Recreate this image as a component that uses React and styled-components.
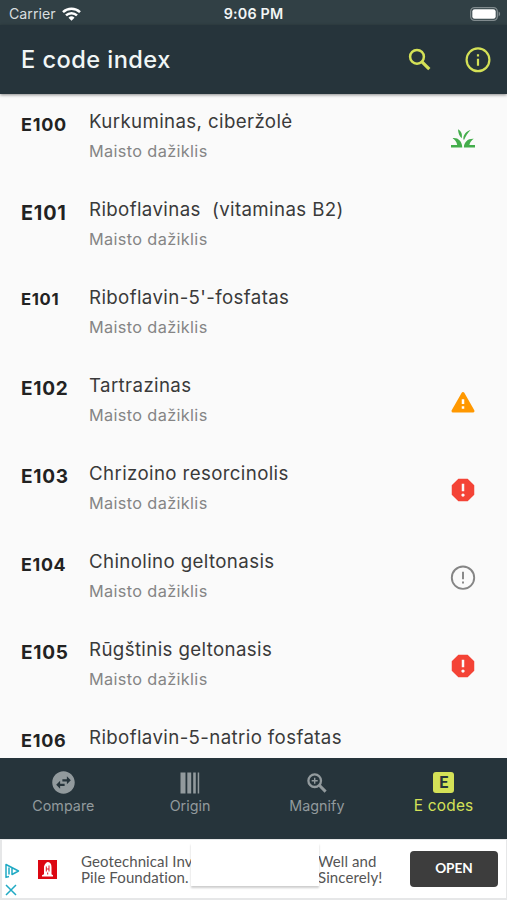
import { createGlobalStyle, styled } from "styled-components";
import { MdReport, MdSwapHorizontalCircle } from "react-icons/md";

const codes = [
  { code: "E100", size: 18, name: "Kurkuminas, ciberžolė", status: "plant" },
  { code: "E101", size: 19.8, name: "Riboflavinas  (vitaminas B2)" },
  { code: "E101", size: 16.6, name: "Riboflavin-5'-fosfatas" },
  { code: "E102", size: 19, name: "Tartrazinas", status: "warning" },
  { code: "E103", size: 19, name: "Chrizoino resorcinolis", status: "danger" },
  { code: "E104", size: 17.8, name: "Chinolino geltonasis", status: "unknown" },
  { code: "E105", size: 19, name: "Rūgštinis geltonasis", status: "danger" },
  { code: "E106", size: 18, name: "Riboflavin-5-natrio fosfatas" },
];

const PlantIcon = () => (
  <svg width="26" height="26" viewBox="0 0 26 26" fill="#43ad4b">
    <path d="M1 22.500v-2.400h6.200c-.6-3.400-2.200-5.600-4.600-6.900 5.300-.7 9.400 2.700 9.700 9.300z" />
    <path d="M25 22.500v-2.400h-5.600c.6-2.800 2-4.800 4.300-6.300-5.800-.3-9.800 3.200-9.800 8.700z" />
    <path d="M8 4.300c3.100 1.700 4.500 4.500 3.700 9-2.300-2.100-3.500-5-3.700-9z" />
    <path d="M20.600 5.100c-4.100 1.200-6.900 4-7.300 8.400l.6 1.700c2.100-4.300 3.700-7 6.700-10.100z" />
  </svg>
);

const WarningIcon = () => (
  <svg width="26" height="26" viewBox="0 0 26 26" fill="none">
    <path d="M13 4.500 23 22H3z" fill="#ff9800" stroke="#ff9800" strokeWidth="3" strokeLinejoin="round" />
    <path d="M13 10.300v4.600M13 17.300v2.500" stroke="#fff" strokeWidth="2.500" />
  </svg>
);

const UnknownIcon = () => (
  <svg width="26" height="27" viewBox="0 0 26 27" fill="none" stroke="#858585" strokeWidth="1.900">
    <circle cx="13" cy="12.700" r="11.200" />
    <path d="M13 6.800v7.400M13 16.600v2" />
  </svg>
);

const InfoIcon = () => (
  <svg width="26" height="26" viewBox="0 0 26 26" fill="none" stroke="currentColor" strokeWidth="2.200">
    <circle cx="13" cy="12.800" r="11.400" />
    <path d="M13 11.800v6.900M13 7.300v2.300" />
  </svg>
);

const SearchIcon = () => (
  <svg width="23" height="23" viewBox="0 0 23 23" fill="none" stroke="currentColor">
    <circle cx="9" cy="8.800" r="6.900" strokeWidth="2.500" />
    <path d="m14 13.800 7.300 7.300" strokeWidth="3.200" />
  </svg>
);

const ZoomIcon = () => (
  <svg width="20" height="20" viewBox="0 0 20 20" fill="none" stroke="currentColor">
    <circle cx="7.700" cy="7.700" r="6.300" strokeWidth="2.300" />
    <path d="m12.300 12.300 6.300 6.300" strokeWidth="3" />
    <path d="M7.700 4.700v6M4.700 7.700h6" strokeWidth="1.400" />
  </svg>
);

const statusIcons = {
  plant: <PlantIcon />,
  warning: <WarningIcon />,
  danger: <MdReport size={30} color="#f44336" />,
  unknown: <UnknownIcon />,
};

const WifiIcon = () => (
  <svg width="19" height="14" viewBox="0 0 19 14" fill="none" stroke="#fff" strokeWidth="2.500">
    <path d="M1 5.200a12.300 12.300 0 0 1 17 0" />
    <path d="M4 8.400a8 8 0 0 1 11 0" />
    <path d="M9.500 13.700 6.500 10.700a4.300 4.300 0 0 1 6 0z" fill="#fff" stroke="none" />
  </svg>
);

const BatteryIcon = () => (
  <svg width="31" height="14" viewBox="0 0 31 14">
    <rect x=".7" y=".7" width="26.600" height="12.600" rx="3.800" fill="none" stroke="#818b8e" strokeWidth="1.300" />
    <rect x="2.300" y="2.300" width="23.400" height="9.400" rx="2.300" fill="#fff" />
    <path d="M28.600 4.600c2 .8 2 4 0 4.800z" fill="#818b8e" />
  </svg>
);

const BarcodeIcon = () => (
  <svg width="20" height="22" viewBox="0 0 20 22" fill="currentColor">
    <path d="M.5.500h5v21h-5zM7.300.500h3.900v21H7.300zM13.200.500h2.600v21h-2.600zM17.700.500h1.500v21h-1.500z" />
  </svg>
);

const AdChoicesIcon = () => (
  <svg width="15" height="16" viewBox="0 0 15 16" fill="none" stroke="#20aac4" strokeWidth="1.500">
    <path d="M4 13.500 1 14.400V1.500L13.500 8 7 11.500V5.200" strokeLinejoin="round" />
    <path d="M4 4.500v7" />
  </svg>
);

const CloseIcon = () => (
  <svg width="12" height="12" viewBox="0 0 12 12" stroke="#20aac4" strokeWidth="1.500">
    <path d="m1 1 10 10M11 1 1 11" />
  </svg>
);

const AdvertiserLogo = () => (
  <svg width="19" height="19" viewBox="0 0 19 19">
    <path d="M0 0h19v19H0z" fill="#dc0712" />
    <path d="M4 16.500v-1.300l2-1V6.500C7 3.500 8.500 2 10 2c2.200 0 3.500 2.400 3.500 5v7.200l1.500 1v1.300z" fill="#fff" />
    <path d="M8.300 6.500v5M11 5.500v6M8.300 9H11M9.700 12.500v2" stroke="#dc0712" strokeWidth=".9" />
  </svg>
);

const CodeRow = ({ code, size, name, status }) => (
  <Row>
    <Code $size={size}>{code}</Code>
    <Info>
      <Name>{name}</Name>
      <Category>Maisto dažiklis</Category>
    </Info>
    <Status>{statusIcons[status]}</Status>
  </Row>
);

const App = () => (
  <Screen>
    <GlobalStyle />
    <StatusBar>
      <Carrier>
        Carrier <WifiIcon />
      </Carrier>
      <Clock>9:06 PM</Clock>
      <Battery>
        <BatteryIcon />
      </Battery>
    </StatusBar>
    <AppBar>
      <Title>E code index</Title>
      <Actions>
        <IconButton aria-label="Search">
          <SearchIcon />
        </IconButton>
        <IconButton aria-label="Info">
          <InfoIcon />
        </IconButton>
      </Actions>
    </AppBar>
    <List>
      {codes.map((item, index) => (
        <CodeRow key={index} {...item} />
      ))}
    </List>
    <TabBar>
      <Tab>
        <TabIcon>
          <MdSwapHorizontalCircle size={27} />
        </TabIcon>
        <TabLabel>Compare</TabLabel>
      </Tab>
      <Tab>
        <TabIcon>
          <BarcodeIcon />
        </TabIcon>
        <TabLabel>Origin</TabLabel>
      </Tab>
      <Tab>
        <TabIcon>
          <ZoomIcon />
        </TabIcon>
        <TabLabel>Magnify</TabLabel>
      </Tab>
      <Tab $active>
        <TabIcon>
          <Badge>E</Badge>
        </TabIcon>
        <TabLabel $active>E codes</TabLabel>
      </Tab>
    </TabBar>
    <Ad>
      <AdControls>
        <AdChoicesIcon />
        <CloseIcon />
      </AdControls>
      <AdvertiserLogo />
      <AdText>
        <span>Geotechnical Inv</span>
        <span>Pile Foundation.</span>
      </AdText>
      <AdTextEnd>
        <span>Well and</span>
        <span>Sincerely!</span>
      </AdTextEnd>
      <OpenButton>OPEN</OpenButton>
      <AdCover />
    </Ad>
  </Screen>
);

export default App;

const GlobalStyle = createGlobalStyle`
  * {
    box-sizing: border-box;
  }
  body {
    margin: 0;
    font-family: Inter, "Liberation Sans", sans-serif;
  }
  svg {
    display: block;
    flex-shrink: 0;
  }
`;

const Screen = styled.div`
  display: flex;
  flex-direction: column;
  height: 900px;
  background: #fafafa;
  overflow: hidden;
`;

const StatusBar = styled.div`
  display: grid;
  grid-template-columns: 1fr auto 1fr;
  align-items: center;
  height: 25px;
  padding: 2px 6px 0 9px;
  background: #314045;
  color: #fff;
  flex-shrink: 0;
`;

const Carrier = styled.div`
  display: flex;
  align-items: center;
  gap: 6px;
  font-size: 14.2px;
  color: #d8dddf;
`;

const Clock = styled.div`
  margin-left: -3px;
  font-size: 14.3px;
  font-weight: 600;
  letter-spacing: 0.2px;
  color: #f2f5f5;
`;

const Battery = styled.div`
  display: flex;
  justify-content: flex-end;
`;

const AppBar = styled.header`
  display: flex;
  justify-content: space-between;
  align-items: center;
  height: 69px;
  padding: 0 16px 0 21px;
  background: #26343b;
  box-shadow: 0 1px 3px rgba(0, 0, 0, 0.45);
  flex-shrink: 0;
  z-index: 1;
`;

const Title = styled.h1`
  margin: 0;
  font-size: 23.6px;
  font-weight: 500;
  letter-spacing: 0.45px;
  color: #f1f6f6;
`;

const Actions = styled.div`
  display: flex;
  align-items: center;
  gap: 34px;
`;

const IconButton = styled.button`
  padding: 0;
  border: none;
  background: none;
  color: #d4e157;
`;

const List = styled.main`
  flex: 1;
  min-height: 0;
  overflow: hidden;
`;

const Row = styled.div`
  display: grid;
  grid-template-columns: 68px 1fr 30px;
  height: 88px;
  padding: 0 29px 0 21px;
`;

const Code = styled.div`
  padding-top: 19px;
  font-size: ${(props) => props.$size}px;
  font-weight: 700;
  line-height: 1.3;
  letter-spacing: 0.04em;
  color: #222;
`;

const Info = styled.div`
  display: flex;
  flex-direction: column;
  padding-top: 16px;
`;

const Name = styled.div`
  font-size: 18.7px;
  line-height: 24px;
  letter-spacing: 0.37px;
  white-space: pre;
  color: #3a3a3a;
`;

const Category = styled.div`
  margin-top: 7px;
  font-size: 16.3px;
  line-height: 20px;
  letter-spacing: 0.35px;
  color: #858585;
`;

const Status = styled.div`
  display: flex;
  align-items: center;
  justify-content: center;
`;

const TabBar = styled.nav`
  display: grid;
  grid-template-columns: repeat(4, 1fr);
  height: 81px;
  padding-top: 11px;
  background: #26343b;
  flex-shrink: 0;
`;

const Tab = styled.div`
  display: flex;
  flex-direction: column;
  align-items: center;
  color: ${(props) => (props.$active ? "#d4e157" : "#929a9d")};
`;

const TabIcon = styled.div`
  display: flex;
  align-items: center;
  height: 27px;
`;

const TabLabel = styled.div`
  font-size: ${(props) => (props.$active ? 15.4 : 14.3)}px;
  line-height: 19px;
  letter-spacing: ${(props) => (props.$active ? 0.2 : 0.05)}px;
`;

const Badge = styled.div`
  width: 21px;
  height: 21px;
  border-radius: 3px;
  background: #d4e157;
  color: #26343b;
  font-family: Roboto, sans-serif;
  font-size: 16px;
  font-weight: 700;
  line-height: 21px;
  text-align: center;
`;

const Ad = styled.aside`
  position: relative;
  display: flex;
  align-items: center;
  height: 61px;
  padding: 0 8px 0 3px;
  border: solid #e6e7e8;
  border-width: 1px 1px 2px 2px;
  background: #fff;
  flex-shrink: 0;
`;

const AdControls = styled.div`
  display: flex;
  flex-direction: column;
  gap: 5px;
  width: 33px;
  padding-top: 20px;
`;

const AdText = styled.div`
  display: flex;
  flex-direction: column;
  flex-shrink: 0;
  width: 261px;
  padding-left: 24px;
  font-family: Lato, sans-serif;
  font-size: 15px;
  font-variant-ligatures: none;
  line-height: 16px;
  letter-spacing: 0.1px;
  color: #555;
`;

const AdTextEnd = styled(AdText)`
  width: 70px;
  padding-left: 0;
`;

const OpenButton = styled.button`
  width: 88px;
  height: 36px;
  margin-left: auto;
  padding: 0 0 2px;
  border: none;
  border-radius: 4px;
  background: #3d3d3d;
  color: #fff;
  font-family: Lato, sans-serif;
  font-size: 13.6px;
  font-weight: 700;
`;

const AdCover = styled.div`
  position: absolute;
  top: 3px;
  left: 189px;
  width: 128px;
  height: 43px;
  background: #fff;
  box-shadow: 0 2px 2px rgba(0, 0, 0, 0.2);
`;
